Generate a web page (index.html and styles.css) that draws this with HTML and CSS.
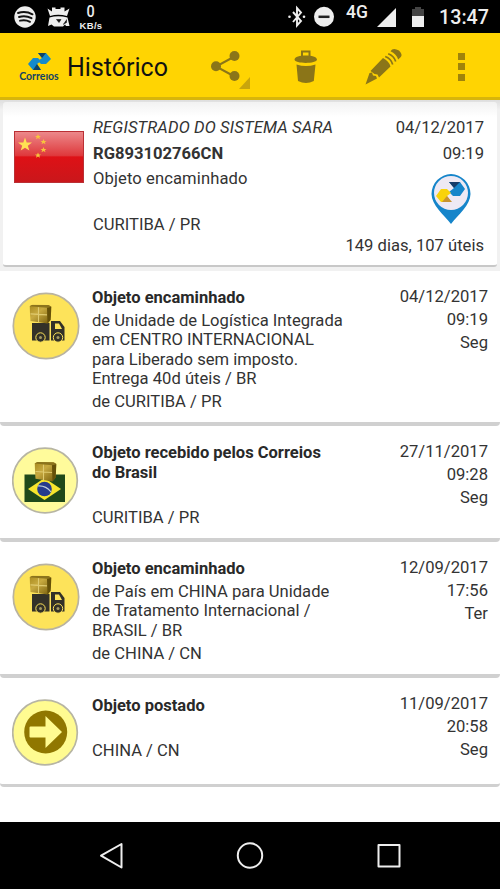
FILE: index.html
```
<!DOCTYPE html>
<html lang="pt-BR">
<head>
<meta charset="utf-8">
<title>Histórico</title>
<link rel="stylesheet" href="styles.css">
</head>
<body>
<svg class="defs" width="0" height="0" aria-hidden="true">
  <defs>
    <linearGradient id="flag" x1="0" y1="0" x2="0" y2="1"><stop offset="0" stop-color="#ec8a8c"/><stop offset=".47" stop-color="#df393c"/><stop offset=".5" stop-color="#de1116"/><stop offset="1" stop-color="#c9171b"/></linearGradient>
    <linearGradient id="box" x1="0" y1="0" x2="1" y2="1"><stop offset="0" stop-color="#a7891d"/><stop offset=".4" stop-color="#c8aa40"/><stop offset="1" stop-color="#735a09"/></linearGradient>
    <symbol id="package" viewBox="0 0 22 19" preserveAspectRatio="none">
      <path d="M0 1.500L3 0 19 .3 22 2 21 15 18 18.500 1 16Z" fill="url(#box)"/>
      <path d="M0 1.500L3 0 19 .3 22 2 17.500 3Z" fill="#8b731c"/>
      <path d="M17.500 3L22 2 21 15 18 18.500Z" fill="#655008"/>
      <path d="M9 2.500V17M1 9L17.500 10" stroke="#e0cb70" stroke-width="1.100" fill="none"/>
    </symbol>
    <symbol id="truck" viewBox="0 0 68 68">
      <circle cx="34" cy="34" r="32.700" fill="#fde35a" stroke="#b9b3a0" stroke-width="1.700"/>
      <path d="M20 31H37.500V48.500H20ZM39 29H48L52.500 35V48.500H39Z" fill="#333128"/>
      <path d="M43 31.500H47L50 37H43Z" fill="#fde35a"/>
      <circle cx="28.500" cy="45.500" r="4.700" fill="#333128" stroke="#fde35a"/><circle cx="46" cy="45.500" r="4.700" fill="#333128" stroke="#fde35a"/>
      <circle cx="28.500" cy="45.500" r="1.500" fill="#a49a62"/><circle cx="46" cy="45.500" r="1.500" fill="#a49a62"/>
      <use href="#package" x="17.500" y="12.800" width="22" height="19.200"/>
    </symbol>
  </defs>
</svg>

<header class="status">
  <svg class="status-left" width="70" height="33" viewBox="0 0 70 33">
    <circle cx="25" cy="17" r="10.700" fill="#eee"/>
    <path d="M18 13Q25.500 10.500 32.500 14.300M19 17Q25.500 15 31.500 18.200M20 20.700Q25.500 19.300 30 21.800" fill="none" stroke="#111" stroke-width="1.900" stroke-linecap="round"/>
    <path d="M47.500 8.500L52 11.500V7.500H55.500V9H60.500V7.500H64.500V11.500L69.500 8.500 67 16Q58 13.500 50 16Z" fill="#eee"/>
    <path d="M49.500 17.500Q58 15 67.500 17.500L69.500 26H66L65 24.500 63 26.500H54L51.500 24.500 48 26Z" fill="#eee"/>
    <path d="M56.500 19.500H61L59 22.500ZM66.500 19.500V22.500L63 24.500" fill="#111" stroke="#111" stroke-width=".6"/>
  </svg>
  <div class="speed"><b>0</b><span>KB/s</span></div>
  <svg class="status-icons" width="50" height="33" viewBox="0 0 50 33">
    <path d="M5 12L13 21 9 25.500V8L13 12.500 5 22" fill="none" stroke="#eee" stroke-width="1.900"/>
    <circle cx="1.500" cy="16.800" r="1.300" fill="#eee"/><circle cx="16" cy="16.800" r="1.300" fill="#eee"/>
    <circle cx="36" cy="16.800" r="10" fill="#eee"/><path d="M30.500 16.800H41.500" stroke="#222" stroke-width="2.500"/>
  </svg>
  <span class="network">4G</span>
  <svg class="signal" width="50" height="33" viewBox="0 0 50 33">
    <path d="M1 27L20 8V27Z" fill="#eee"/>
    <path d="M36 9H39V7H45V9H48V17H36Z" fill="#444"/><path d="M36 16H48V27H36Z" fill="#eee"/>
  </svg>
  <time class="clock">13:47</time>
</header>

<nav class="appbar">
  <div class="brand">
    <svg width="24" height="18" viewBox="0 0 24 18">
      <path d="M10 0H18L23 6 18 11H13L10 8 14 5Z" fill="#158acb"/><path d="M10 0H18L14 5Z" fill="#124363"/>
      <path d="M5 5H10L13 8 9 11 13 17H5L0 11Z" fill="#158acb"/><path d="M5 17L9 11 13 17Z" fill="#124363"/>
    </svg>
    <span>Correıos</span>
  </div>
  <h1>Histórico</h1>
  <svg class="actions" width="300" height="64" viewBox="200 33 300 64" fill="#8b7518">
    <path d="M234.500 56.500L216 66.500 234.500 76.500" fill="none" stroke="#8b7518" stroke-width="2"/>
    <circle cx="234.500" cy="56" r="5"/><circle cx="216" cy="66.200" r="5"/><circle cx="234.500" cy="76" r="5"/>
    <path d="M250 77V89H239Z" fill="#c9a50c"/>
    <path d="M302 56V51.500H309.500V56" fill="none" stroke="#8b7518" stroke-width="2"/>
    <path d="M294.500 59.500C294.500 54 317 54 317 59.500C317 64 294.500 64 294.500 59.500ZM296.500 64.500Q306 67.500 315.500 64.500L313.800 81Q306 85 298 81Z"/>
    <path d="M365.500 84.500L369.500 73 372 72.500 373 75.500 376 76 377 78.500Z"/>
    <path d="M370.500 71L383 58Q389 61 390.500 66.500L379 77.500 377.500 74.500 374.500 74Z"/>
    <path d="M385.200 56.500Q391 58.500 392.700 64.500M388.200 53.800Q394 55.800 395.700 61.500" fill="none" stroke="#8b7518" stroke-width="1.700"/>
    <path d="M390.500 51.200Q393 47 399 50.500Q403 54.500 400.800 57L398.200 59.500Q396.500 54 390.500 51.200Z"/>
    <path d="M458 53H465V60H458ZM458 63H465V70H458ZM458 74H465V81H458Z" fill="#a0830b"/>
  </svg>
</nav>

<section class="summary">
  <article class="summary-card">
    <svg class="flag" width="70" height="52" viewBox="0 0 70 52">
      <rect x=".5" y=".5" width="69" height="51" fill="url(#flag)" stroke="#ba3035"/>
      <path d="M11 6.500L12.700 11.500H18L13.800 14.700 15.400 19.500 11 16.700 6.700 19.500 8.200 14.700 4 11.500H9.300Z" fill="#ffe153"/>
      <g fill="#f8c43c"><path id="star" d="M24 3L24.900 5H27L25.300 6.300 26 8.200 24 7 22 8.200 22.700 6.300 21 5H23.100Z"/><use href="#star" x="5.500" y="5"/><use href="#star" x="5.500" y="13"/><use href="#star" y="18.500"/></g>
    </svg>
    <div class="info">
      <em>REGISTRADO DO SISTEMA SARA</em>
      <strong>RG893102766CN</strong>
      <span class="state">Objeto encaminhado</span>
      <span class="place">CURITIBA / PR</span>
    </div>
    <div class="summary-when">
      <span>04/12/2017</span><span>09:19</span>
      <svg width="40" height="50" viewBox="0 0 40 50">
        <path d="M20 0A20 20 0 0 1 39.500 20C39.500 31 27 41 20 50C13 41 .5 31 .5 20A20 20 0 0 1 20 0Z" fill="#1685ca"/>
        <circle cx="20" cy="19" r="17" fill="#eee9f4"/>
        <path d="M18 8H29L34 15 29 22H22L18 18 23 14Z" fill="#1685ca"/><path d="M18 8H29L23 14Z" fill="#153b69"/>
        <path d="M10 15H16L20 19 16 22 20 28H10L5 22Z" fill="#f9d30b"/><path d="M11 28L16 22 21 28Z" fill="#c99330"/>
      </svg>
      <span class="days">149 dias, 107 úteis</span>
    </div>
  </article>
</section>

<main>
  <article class="event">
    <svg class="icon" viewBox="0 0 68 68"><use href="#truck"/></svg>
    <div class="details"><h2>Objeto encaminhado</h2><p>de Unidade de Logística Integrada<br>em CENTRO INTERNACIONAL<br>para Liberado sem imposto.<br>Entrega 40d úteis / BR</p><p>de CURITIBA / PR</p></div>
    <div class="when"><span>04/12/2017</span><span>09:19</span><span>Seg</span></div>
  </article>
  <article class="event">
    <svg class="icon" viewBox="0 0 68 68">
      <circle cx="33" cy="33.500" r="32.300" fill="#fffb9b" stroke="#b7b5a3" stroke-width="1.700"/>
      <path d="M12.500 27.500H53V55H12.500Z" fill="#20491a"/><path d="M16 42L32.500 31 49 42 32.500 53Z" fill="#f7e52d"/>
      <circle cx="32.500" cy="42" r="7.300" fill="#253b8d"/><path d="M26 39Q34 38.500 39 45" fill="none" stroke="#c1d1dc" stroke-width="1.200"/>
      <use href="#package" x="22.500" y="15" width="22" height="20"/>
    </svg>
    <div class="details"><h2>Objeto recebido pelos Correios<br>do Brasil</h2><p></p><p>CURITIBA / PR</p></div>
    <div class="when"><span>27/11/2017</span><span>09:28</span><span>Seg</span></div>
  </article>
  <article class="event">
    <svg class="icon" viewBox="0 0 68 68"><use href="#truck"/></svg>
    <div class="details"><h2>Objeto encaminhado</h2><p>de País em CHINA para Unidade<br>de Tratamento Internacional /<br>BRASIL / BR</p><p>de CHINA / CN</p></div>
    <div class="when"><span>12/09/2017</span><span>17:56</span><span>Ter</span></div>
  </article>
  <article class="event last">
    <svg class="icon" viewBox="0 0 68 68">
      <circle cx="33" cy="33.500" r="32.300" fill="#fffb91" stroke="#b7b5a3" stroke-width="1.700"/>
      <circle cx="33.700" cy="33" r="21.500" fill="#907700"/><path d="M17.500 28.500Q17.500 27.500 18.500 27.500H33.500V17L50 33 33.500 49V38.500H18.500Q17.500 38.500 17.500 37.500Z" fill="#fffb91"/>
    </svg>
    <div class="details"><h2>Objeto postado</h2><p></p><p>CHINA / CN</p></div>
    <div class="when"><span>11/09/2017</span><span>20:58</span><span>Seg</span></div>
  </article>
</main>

<footer class="navbar">
  <svg width="500" height="67" viewBox="0 822 500 67" fill="none" stroke="#eee" stroke-width="2" stroke-linejoin="round">
    <path d="M121.500 844V867.500L101 855.700Z"/><circle cx="250" cy="855.500" r="12.200"/><rect x="378.500" y="845" width="21" height="21.500"/>
  </svg>
</footer>
</body>
</html>
```
FILE: styles.css
```
* { box-sizing: border-box; }
body { margin: 0; width: 500px; height: 889px; display: flex; flex-direction: column; overflow: hidden; background: #fff; color: #333; font-family: Roboto, sans-serif; font-size: 16.6px; }
h1, h2, p { margin: 0; }
svg { display: block; flex: none; }
.defs { position: absolute; }

.status { flex: none; height: 33px; display: flex; background: #000; color: #eee; }
.speed { width: 24px; margin-left: 9px; padding-top: 3px; display: flex; flex-direction: column; align-items: center; }
.speed b { font-size: 16px; line-height: 17px; font-weight: 500; transform: scaleX(.9); }
.speed span { font-family: "Liberation Sans", sans-serif; font-size: 9.5px; line-height: 11px; font-weight: 700; letter-spacing: .3px; }
.status-icons { margin-left: 185px; }
.network { width: 26px; margin-left: 8px; font-size: 17.5px; line-height: 25px; font-weight: 500; }
.signal { margin-left: 4px; }
.clock { flex: 1; padding-right: 11px; text-align: right; font-size: 19.7px; line-height: 36px; font-weight: 500; }

.appbar { flex: none; height: 67px; display: flex; background: #ffd402; border-bottom: 3px solid #d8b50b; color: #111; }
.brand { width: 40px; margin-left: 19px; padding-top: 20px; display: flex; flex-direction: column; align-items: center; color: #124363; font-family: Lato, sans-serif; font-size: 10.5px; line-height: 11px; font-weight: 700; }
.brand svg { margin-left: 1px; }
.appbar h1 { width: 132px; margin-left: 8px; margin-right: 1px; font-size: 25px; line-height: 70px; font-weight: 400; white-space: nowrap; }

.summary { flex: none; height: 171px; padding: 2px 3px 6px; background: linear-gradient(#dedede, #f1f1f1 10px); }
.summary-card { height: 165px; display: flex; border-radius: 3px; border-bottom: 2px solid #c8c8c8; background: linear-gradient(#f2f2f2, #fff 15px); }
.flag { margin: 29px 9px 0 11px; }
.info { padding-top: 13px; display: flex; flex-direction: column; line-height: 25.5px; white-space: nowrap; }
.info em { letter-spacing: .12px; }
.state { letter-spacing: .1px; }
.place { margin-top: 20px; }
.summary-when { margin-left: auto; padding: 13px 13px 0 0; display: flex; flex-direction: column; align-items: flex-end; line-height: 25.5px; white-space: nowrap; }
.summary-when svg { margin: 8px 13px 9px 0; }

main { flex: 1; }
.event { display: flex; padding: 17px 12px 10.5px; border-bottom: 4px solid #d0d0d0; border-radius: 4px; }
.event.last { min-height: 109px; padding-top: 18px; border-bottom-width: 3px; }
.icon { width: 68px; height: 68px; margin-top: 3.800px; margin-bottom: -4px; }
.details { width: 270px; margin-left: 12px; line-height: 19.500px; white-space: nowrap; }
.details h2 { font-size: 16.5px; font-weight: 700; color: #292929; }
.details p { min-height: 19.500px; margin-top: 3.250px; }
.when { margin: -3.500px 0 -12px auto; display: flex; flex-direction: column; align-items: flex-end; line-height: 23px; }
.navbar { flex: none; height: 67px; background: #000; }
```
